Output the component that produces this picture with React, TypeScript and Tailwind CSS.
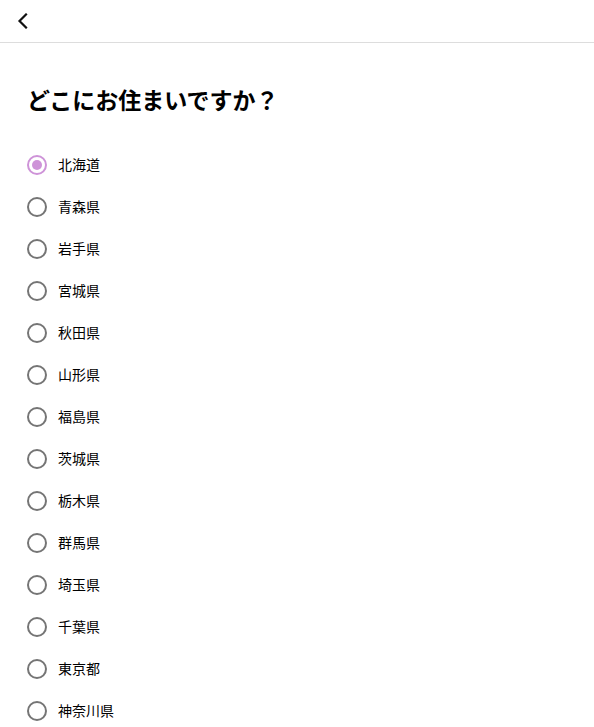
import { useState } from "react"

const prefectures = [
  "北海道",
  "青森県",
  "岩手県",
  "宮城県",
  "秋田県",
  "山形県",
  "福島県",
  "茨城県",
  "栃木県",
  "群馬県",
  "埼玉県",
  "千葉県",
  "東京都",
  "神奈川県",
  "新潟県",
]

export default function App() {
  const [selected, setSelected] = useState("北海道")

  return (
    <div
      className="min-h-screen bg-white text-black"
      style={{ fontFamily: '"Noto Sans CJK JP", "Noto Sans", sans-serif' }}
    >
      {/* Header */}
      <div className="h-[43px] border-b border-[#dddddd] flex items-center pl-[16px]">
        <button aria-label="戻る" className="w-[14px] h-[16px] flex items-center justify-center">
          <svg width="14" height="16" viewBox="0 0 14 16" fill="none">
            <path d="M10 1.5 L3.5 8 L10 14.5" stroke="#111" strokeWidth="2.2" strokeLinecap="square" />
          </svg>
        </button>
      </div>

      <div className="pl-[27px] pt-[40px]">
        <h1 className="text-[23px] leading-[32px] font-bold mb-[29px]">どこにお住まいですか？</h1>

        <div className="flex flex-col">
          {prefectures.map((p) => {
            const checked = selected === p
            return (
              <label key={p} className="h-[42px] flex items-center gap-[11px] cursor-pointer">
                <input
                  type="radio"
                  name="pref"
                  className="hidden"
                  checked={checked}
                  onChange={() => setSelected(p)}
                />
                <span
                  className={`w-[20px] h-[20px] rounded-full border-2 flex items-center justify-center ${
                    checked ? "border-[#ce93d8]" : "border-[#757575]"
                  }`}
                >
                  {checked && <span className="w-[10px] h-[10px] rounded-full bg-[#ce93d8]" />}
                </span>
                <span className="text-[14px] leading-[20px] -mt-[2px]">{p}</span>
              </label>
            )
          })}
        </div>
      </div>
    </div>
  )
}
